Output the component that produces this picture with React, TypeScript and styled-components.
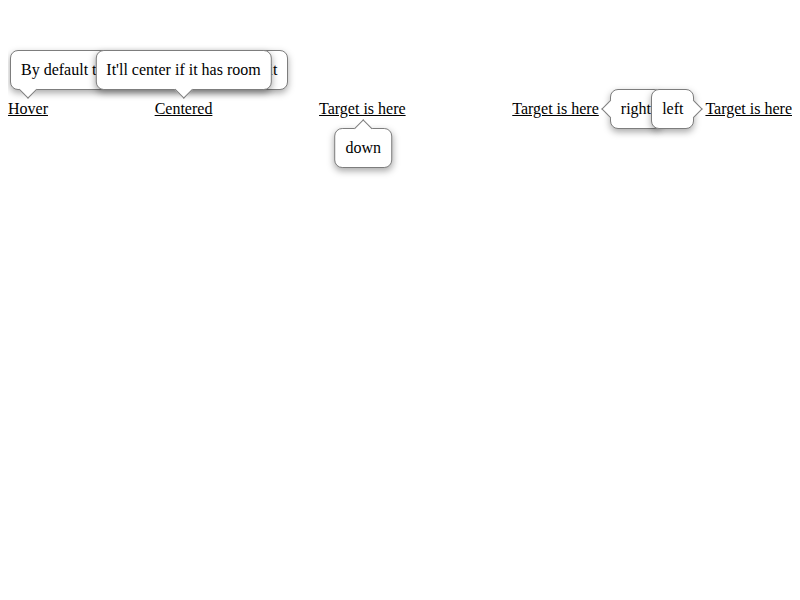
import React from 'react';
import styled, { createGlobalStyle } from 'styled-components';

const GlobalStyle = createGlobalStyle`
  body {
    margin: 8px;
    background: #fff;
    color: #000;
    font-family: "Liberation Serif", "Times New Roman", serif;
    font-size: 16px;
  }
`;

type Placement = 'topStart' | 'top' | 'bottom' | 'right' | 'left';

const Page = styled.div`
  min-height: 584px;
`;

const Row = styled.div`
  display: flex;
  justify-content: space-between;
  align-items: flex-start;
  padding-top: 92px;
`;

const Target = styled.span`
  position: relative;
  display: inline-block;
  white-space: nowrap;
  line-height: 18px;
`;

const Label = styled.span`
  text-decoration: underline;
`;

const BORDER = '#7d7d7d';

function boxPosition(p: Placement): string {
  switch (p) {
    case 'topStart':
      return 'bottom: 28px; left: 2px;';
    case 'top':
      return 'bottom: 28px; left: 50%; transform: translateX(-50%);';
    case 'bottom':
      return 'top: 28px; left: calc(50% + 1px); transform: translateX(-50%);';
    case 'right':
      return 'left: calc(100% + 11px); top: -11px;';
    case 'left':
      return 'right: calc(100% + 11px); top: -11px;';
  }
}

function arrowPosition(p: Placement, arrowX?: number): string {
  switch (p) {
    case 'topStart':
      return `bottom: -7px; left: ${arrowX ?? 17}px; transform: translateX(-50%) rotate(45deg); border-right-width: 1px; border-bottom-width: 1px;`;
    case 'top':
      return 'bottom: -7px; left: 50%; transform: translateX(-50%) rotate(45deg); border-right-width: 1px; border-bottom-width: 1px;';
    case 'bottom':
      return 'top: -7px; left: 50%; transform: translateX(-50%) rotate(45deg); border-top-width: 1px; border-left-width: 1px;';
    case 'right':
      return 'left: -7px; top: 50%; transform: translateY(-50%) rotate(45deg); border-left-width: 1px; border-bottom-width: 1px;';
    case 'left':
      return 'right: -7px; top: 50%; transform: translateY(-50%) rotate(45deg); border-top-width: 1px; border-right-width: 1px;';
  }
}

const Bubble = styled.span<{ $placement: Placement }>`
  position: absolute;
  z-index: 1;
  box-sizing: border-box;
  padding: 10px;
  background: #fff;
  border: 1px solid ${BORDER};
  border-radius: 8px;
  box-shadow: 0 3px 7px rgba(0, 0, 0, 0.34);
  white-space: nowrap;
  line-height: 18px;
  ${(p) => boxPosition(p.$placement)}
`;

const Arrow = styled.span<{ $placement: Placement; $x?: number }>`
  position: absolute;
  box-sizing: border-box;
  width: 13px;
  height: 13px;
  background: #fff;
  border: 0 solid ${BORDER};
  ${(p) => arrowPosition(p.$placement, p.$x)}
`;

type Item = { label: string; tip: string; placement: Placement; arrowX?: number };

const items: Item[] = [
  { label: 'Hover', tip: 'By default the tooltip is located above it', placement: 'topStart', arrowX: 17 },
  { label: 'Centered', tip: "It'll center if it has room", placement: 'top' },
  { label: 'Target is here', tip: 'down', placement: 'bottom' },
  { label: 'Target is here', tip: 'right', placement: 'right' },
  { label: 'Target is here', tip: 'left', placement: 'left' },
];

export default function App() {
  return (
    <Page>
      <GlobalStyle />
      <Row>
        {items.map((it, i) => (
          <Target key={i}>
            <Label>{it.label}</Label>
            <Bubble $placement={it.placement}>
              {it.tip}
              <Arrow $placement={it.placement} $x={it.arrowX} />
            </Bubble>
          </Target>
        ))}
      </Row>
    </Page>
  );
}
